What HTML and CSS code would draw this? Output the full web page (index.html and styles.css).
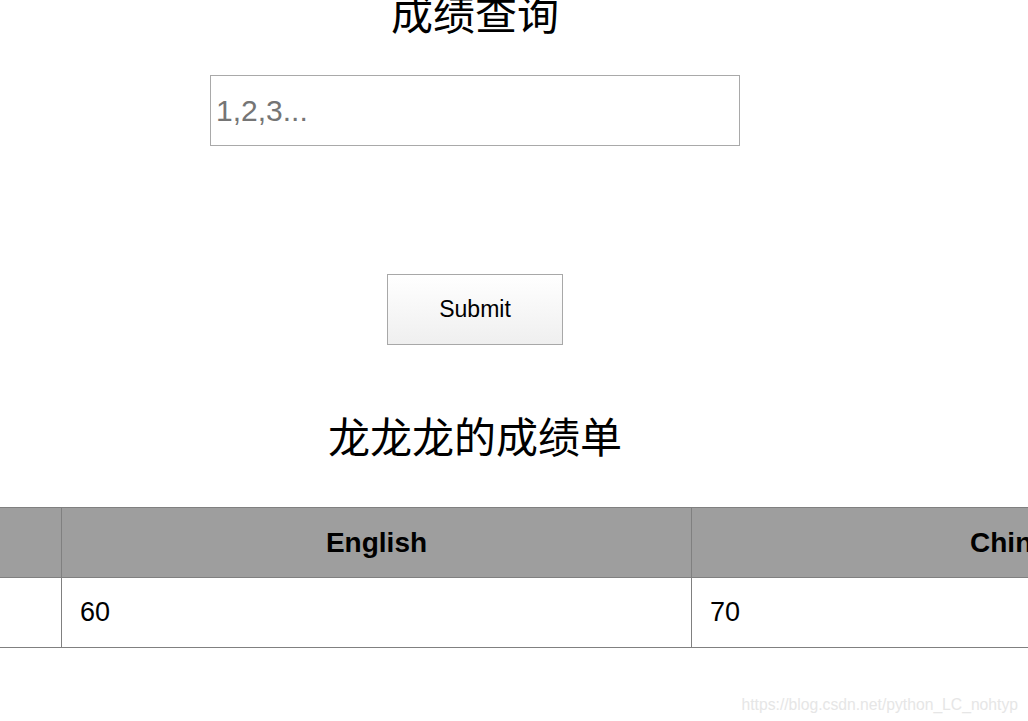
FILE: index.html
```html
<!DOCTYPE html>
<html lang="zh-CN">
<head>
<meta charset="utf-8">
<title>成绩查询</title>
<link rel="stylesheet" href="styles.css">
</head>
<body>
<main class="page">
  <section class="query">
    <h1 class="title">成绩查询</h1>
    <input class="field" type="text" placeholder="1,2,3...">
    <button class="submit" type="button">Submit</button>
    <h2 class="subtitle">龙龙龙的成绩单</h2>
  </section>
  <div class="table">
    <div class="cell head first"></div>
    <div class="cell head center">English</div>
    <div class="cell head center last">Chinese</div>
    <div class="cell first"></div>
    <div class="cell">60</div>
    <div class="cell last">70</div>
  </div>
</main>
<div class="watermark">https://blog.csdn.net/python_LC_nohtyp</div>
</body>
</html>
```

FILE: styles.css
```css
html, body {
  margin: 0;
  padding: 0;
  background: #fff;
  overflow: hidden;
}
body {
  width: 1028px;
  height: 721px;
  font-family: "Liberation Sans", Arial, sans-serif;
  color: #000;
  position: relative;
}
.page {
  display: flex;
  flex-direction: column;
}
.query {
  width: 950px;
  display: flex;
  flex-direction: column;
  align-items: center;
}
.title,
.subtitle {
  font-family: "Noto Sans CJK SC", "Liberation Serif", serif;
  font-weight: 400;
  font-size: 42px;
  line-height: 42px;
  margin: 0;
}
.title {
  margin-top: -9px;
}
.field {
  box-sizing: border-box;
  width: 530px;
  height: 71px;
  margin-top: 42px;
  border: 1px solid #a9a9a9;
  border-radius: 0;
  padding: 0 5px;
  font-family: "Liberation Sans", Arial, sans-serif;
  font-size: 30px;
  color: #000;
  outline: none;
}
.field::placeholder {
  color: #757575;
}
.submit {
  box-sizing: border-box;
  width: 176px;
  height: 71px;
  margin-top: 128px;
  border: 1px solid #a8a8a8;
  border-radius: 0;
  background: linear-gradient(#ffffff, #efefef);
  font-family: "Liberation Sans", Arial, sans-serif;
  font-size: 23px;
  color: #000;
  padding: 0;
}
.subtitle {
  margin-top: 69px;
}
.table {
  margin-top: 51px;
  display: grid;
  grid-template-columns: 62px 630px 665px;
  grid-auto-rows: 70px;
  border-top: 1px solid #808080;
  width: 1357px;
}
.cell {
  box-sizing: border-box;
  border-bottom: 1px solid #808080;
  border-right: 1px solid #808080;
  display: flex;
  align-items: center;
  padding: 0 18px;
  font-size: 27px;
}
.cell.last {
  border-right: none;
}
.head {
  background: #9e9e9e;
  font-weight: 700;
  font-size: 28px;
}
.center {
  justify-content: center;
}
.watermark {
  position: absolute;
  right: 10px;
  bottom: 7px;
  font-family: "Liberation Sans", Arial, sans-serif;
  font-size: 15.7px;
  color: #e6e6e6;
}
```
